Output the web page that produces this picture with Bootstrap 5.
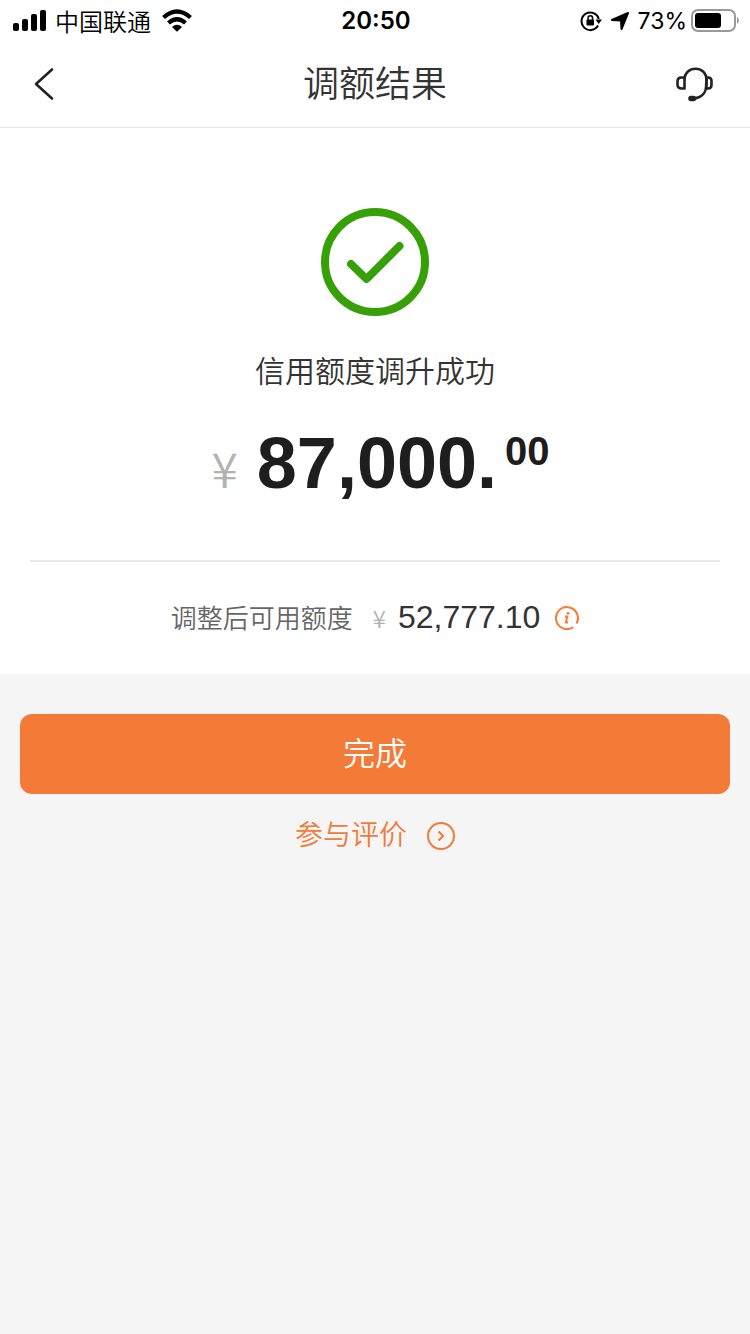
<!DOCTYPE html>
<html lang="zh-CN">
<head>
<meta charset="utf-8">
<meta name="viewport" content="width=device-width, initial-scale=1">
<title>调额结果</title>
<link href="https://cdn.jsdelivr.net/npm/bootstrap@5.3.0/dist/css/bootstrap.min.css" rel="stylesheet">
<style>
  body { background: #f5f5f5; color: #333; font-family: "Liberation Sans", "Noto Sans CJK SC", sans-serif; font-weight: 350; }
  svg { display: block; flex: none; }
  .status-bar { height: 40px; padding: 0 10px 0 12px; color: #000; font: 400 24px/40px Inter, "Noto Sans CJK SC", sans-serif; }
  .carrier { font-family: "Noto Sans CJK SC", sans-serif; font-weight: 350; margin: 0 10px 0 9px; line-height: 38px; }
  .clock { font-weight: 600; padding-top: 1px; }
  .percent { font-size: 23px; padding-top: 1px; }
  .title-bar { height: 88px; border-bottom: 1px solid #e4e4e4; padding: 0 30px; }
  .title-bar h1 { font-size: 36px; line-height: 48px; font-weight: 350; padding-top: 2px; }
  .icon-button { width: 48px; height: 48px; color: #222; }
  .result { padding: 80px 30px 0; }
  .result-text { font-size: 30px; line-height: 40px; margin-top: 36px; }
  .amount { margin-top: 29px; padding-left: 11px; height: 85px; line-height: 84px; }
  .yen, .small-yen { font-family: "Noto Sans CJK SC", sans-serif; font-weight: 350; color: #b2b2b2; }
  .yen { font-size: 48px; line-height: 48px; margin-right: 19px; }
  .whole { color: #1e1e1e; font-size: 72px; font-weight: 700; }
  .cents { color: #1e1e1e; font-size: 40px; font-weight: 700; line-height: 60px; margin-left: 8px; }
  .available { border-top: 2px solid #e8e8e8; margin-top: 54px; height: 114px; line-height: 40px; }
  .available dt { color: #666; font-size: 26px; font-weight: 350; padding-top: 2px; }
  .available dd { font-size: 32px; font-weight: 400; }
  .available-amount { padding-bottom: 2px; }
  .small-yen { font-size: 24px; line-height: 24px; margin: 0 12px 0 20px; }
  .info { color: #fb7a36; margin-left: 15px; }
  .actions { padding: 40px 20px; }
  .btn-finish { --bs-btn-bg: #f47a38; --bs-btn-color: #fff; --bs-btn-hover-bg: #e56e2e; --bs-btn-hover-color: #fff; --bs-btn-active-bg: #d96527; --bs-btn-active-color: #fff; height: 80px; border: 0; border-radius: 12px; font-size: 32px; font-weight: 350; line-height: 40px; }
  .review { color: #f47a38; font-size: 28px; line-height: 42px; margin-top: 21px; gap: 20px; }
</style>
</head>
<body>
<div class="bg-white">
  <div class="status-bar row g-0 align-items-center">
    <div class="col d-flex align-items-center">
      <svg width="34" height="22" viewBox="0 0 34 22" aria-hidden="true"><rect x="1" y="13" width="6" height="8" rx="2"/><rect x="10" y="9" width="6" height="12" rx="2"/><rect x="19" y="4" width="6" height="17" rx="2"/><rect x="28" y="0" width="6" height="21" rx="2"/></svg>
      <span class="carrier">中国联通</span>
      <svg width="32" height="24" viewBox="0 0 32 24" aria-hidden="true"><path d="M2.500 8.500Q16-3.500 29.500 8.500M7.500 14Q16 6.500 24.500 14" fill="none" stroke="#000" stroke-width="4.200"/><path d="M11 18Q16 13.500 21 18L16.600 22.200Q16 22.700 15.400 22.200Z"/></svg>
    </div>
    <time class="clock col-auto">20:50</time>
    <div class="col d-flex align-items-center justify-content-end">
      <svg width="22" height="22" viewBox="0 0 22 22" aria-hidden="true"><path d="M18 15.600A8.800 8.800 0 1 1 18.800 9" fill="none" stroke="#000" stroke-width="2"/><path d="M15.500 9.500H22L18.700 14Z"/><rect x="6.500" y="9.500" width="7.500" height="6" rx="1"/><path d="M8 10V8a2.300 2.300 0 0 1 4.600 0v2" fill="none" stroke="#000" stroke-width="1.500"/></svg>
      <svg class="mx-2" width="20" height="20" viewBox="0 0 20 20" aria-hidden="true"><path d="M18 2L11.500 18L11 9.500L2 9Z" stroke="#000" stroke-width="2" stroke-linejoin="round"/></svg>
      <span class="percent">73%</span>
      <svg class="ms-1" width="49" height="24" viewBox="0 0 49 24" aria-hidden="true"><rect x="1" y="1" width="43" height="21" rx="6" fill="none" stroke="#999" stroke-width="2"/><rect x="4" y="4" width="26" height="15" rx="3"/><path d="M46 8Q50 11.500 46 15Z" fill="#999"/></svg>
    </div>
  </div>
  <header class="title-bar d-flex align-items-center justify-content-between">
    <button type="button" class="icon-button btn p-0 border-0" aria-label="返回">
      <svg width="48" height="48" viewBox="0 0 48 48" fill="none" stroke="currentColor" stroke-width="2.600" stroke-linecap="round" stroke-linejoin="round"><path d="M22 9.500L6 24L22 38.500"/></svg>
    </button>
    <h1 class="mb-0">调额结果</h1>
    <button type="button" class="icon-button btn p-0 border-0" aria-label="客服">
      <svg width="48" height="48" viewBox="0 0 48 48" fill="none" stroke="currentColor" stroke-width="2.600" stroke-linejoin="round"><path d="M12.500 28.500H10Q5.500 28.500 5.500 24.500V21.500Q5.500 17.500 9.500 17.500H12.500ZM12.500 20C12.500 5 34.500 5 34.500 20V24C34.500 32 30 38 21 38.500"/><path d="M34.500 17.500H36Q39.500 17.500 39.500 21V25Q39.500 28.500 36 28.500H34Z"/><rect x="17.500" y="37" width="5.500" height="3" rx="1.500" fill="currentColor"/></svg>
    </button>
  </header>
  <main class="result">
    <svg class="mx-auto" width="108" height="108" viewBox="0 0 108 108" fill="none" stroke="#37a006" stroke-width="8" stroke-linecap="round" stroke-linejoin="round" aria-hidden="true"><circle cx="54" cy="54" r="50"/><path d="M30 56L45.500 71L78.500 38"/></svg>
    <p class="result-text text-center mb-0">信用额度调升成功</p>
    <div class="amount d-flex justify-content-center align-items-start">
      <div><span class="yen">¥</span><span class="whole">87,000.</span></div><span class="cents">00</span>
    </div>
    <dl class="available d-flex justify-content-center align-items-center mb-0">
      <dt>调整后可用额度</dt>
      <dd class="d-flex align-items-center m-0"><div class="available-amount"><span class="small-yen">¥</span><span>52,777.10</span></div>
        <button type="button" class="info btn p-0 border-0" aria-label="额度说明"><svg width="24" height="24" viewBox="0 0 24 24" fill="none" stroke="currentColor" stroke-width="2"><path d="M18.200 21.100A11 11 0 1 1 21.500 17.500"/><path d="M10 10.500H12.200L11 16.600H13" stroke-width="2"/><circle cx="13" cy="7.300" r="1.400" fill="currentColor" stroke="none"/></svg></button>
      </dd>
    </dl>
  </main>
</div>
<div class="actions">
  <button type="button" class="btn btn-finish w-100">完成</button>
  <a href="#" class="review d-flex justify-content-center align-items-center text-decoration-none"><span>参与评价</span>
    <svg width="28" height="28" viewBox="0 0 28 28" fill="none" stroke="currentColor" stroke-width="2" aria-hidden="true"><circle cx="14" cy="14" r="13"/><path d="M11.500 9.500L16.200 14L11.500 18.500"/></svg>
  </a>
</div>
<script src="https://cdn.jsdelivr.net/npm/bootstrap@5.3.0/dist/js/bootstrap.bundle.min.js"></script>
</body>
</html>
